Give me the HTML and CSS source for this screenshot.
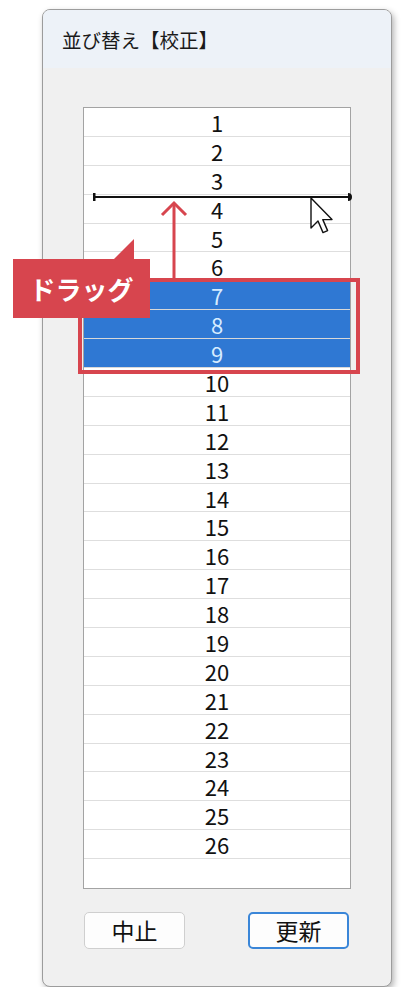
FILE: index.html
```html
<!DOCTYPE html>
<html lang="ja">
<head>
    <meta charset="UTF-8">
    <title>並び替え【校正】</title>
    <link rel="stylesheet" href="styles.css">
</head>
<body>
    <div class="window">
        <div class="title-bar">並び替え【校正】</div>

        <div class="list">
            <div class="row">1</div>
            <div class="row">2</div>
            <div class="row">3</div>
            <div class="row">4</div>
            <div class="row">5</div>
            <div class="row">6</div>
            <div class="row selected">7</div>
            <div class="row selected">8</div>
            <div class="row selected">9</div>
            <div class="row">10</div>
            <div class="row">11</div>
            <div class="row">12</div>
            <div class="row">13</div>
            <div class="row">14</div>
            <div class="row">15</div>
            <div class="row">16</div>
            <div class="row">17</div>
            <div class="row">18</div>
            <div class="row">19</div>
            <div class="row">20</div>
            <div class="row">21</div>
            <div class="row">22</div>
            <div class="row">23</div>
            <div class="row">24</div>
            <div class="row">25</div>
            <div class="row">26</div>
            <div class="row empty"></div>
        </div>

        <div class="buttons">
            <button class="btn">中止</button>
            <button class="btn primary">更新</button>
        </div>

        <!-- 挿入位置の線 -->
        <svg class="insert-line" width="260" height="12" viewBox="0 0 260 12">
            <line x1="2" y1="6" x2="257" y2="6" stroke="#111" stroke-width="2"/>
            <rect x="1" y="2" width="2.5" height="8" fill="#111"/>
            <path d="M256 2 Q260 2 260 6 Q260 10 256 10 Z" fill="#111"/>
        </svg>

        <!-- マウスカーソル -->
        <svg class="cursor" width="24" height="38" viewBox="0 0 12 19">
            <path d="M0.5 0.5 L0.5 15.5 L4 12 L6.5 17.8 L8.8 16.8 L6.4 11.3 L11 11.3 Z" fill="#fff" stroke="#111" stroke-width="0.7" stroke-linejoin="round"/>
        </svg>

        <!-- 赤い矢印 -->
        <svg class="drag-arrow" width="30" height="78" viewBox="0 0 30 78">
            <line x1="15" y1="3" x2="15" y2="78" stroke="#d7454e" stroke-width="3"/>
            <polyline points="3,15 15,3 27,15" fill="none" stroke="#d7454e" stroke-width="3"/>
        </svg>

        <div class="drag-box"></div>
        <div class="drag-label">ドラッグ</div>
    </div>
</body>
</html>
```

FILE: styles.css
```css
body {
    margin: 0;
    padding: 9px 0 0 42px;
    background-color: #fff;
    font-family: 'Noto Sans CJK JP', sans-serif;
}
.window {
    position: relative;
    width: 350px;
    height: 978px;
    box-sizing: border-box;
    border: 1px solid #9c9c9c;
    border-radius: 8px;
    background-color: #f0f0f0;
    box-shadow: 2px 3px 6px rgba(0,0,0,0.3);
}
.title-bar {
    height: 58px;
    padding: 15px 0 0 19px;
    box-sizing: border-box;
    background-color: #edf2f8;
    border-radius: 7px 7px 0 0;
    font-size: 19.5px;
    color: #1a1a1a;
}
.list {
    margin: 39px 0 0 40px;
    width: 268px;
    box-sizing: border-box;
    border: 1px solid #a3a3a3;
    background-color: #fff;
}
.row {
    height: 28.9px;
    box-sizing: border-box;
    border-bottom: 1px solid #dedede;
    text-align: center;
    font-size: 22px;
    line-height: 28px;
    color: #111;
}
.row.selected {
    background-color: #2f78d3;
    border-bottom-color: #d8d8d8;
    color: #d6ecff;
}
.row.empty {
    border-bottom: none;
}
.buttons {
    display: flex;
    justify-content: space-between;
    width: 265px;
    margin: 23px 0 0 41px;
}
.btn {
    width: 101px;
    height: 37px;
    border: 1px solid #cfcfcf;
    border-radius: 5px;
    background-color: #fdfdfd;
    font-family: 'Noto Sans CJK JP', sans-serif;
    font-size: 23px;
    line-height: 33px;
    color: #111;
    padding: 0;
}
.btn.primary {
    border: 2px solid #3a86d8;
}
.insert-line {
    position: absolute;
    left: 49px;
    top: 181px;
}
.cursor {
    position: absolute;
    left: 267px;
    top: 187px;
}
.drag-arrow {
    position: absolute;
    left: 116px;
    top: 190px;
}
.drag-box {
    position: absolute;
    left: 35px;
    top: 268px;
    width: 282px;
    height: 96px;
    box-sizing: border-box;
    border: 4px solid #d7454e;
}
.drag-label {
    position: absolute;
    left: -30px;
    top: 249px;
    width: 137px;
    height: 59px;
    background-color: #d7454e;
    color: #fff;
    font-weight: bold;
    font-size: 26px;
    line-height: 59px;
    text-align: center;
}
.drag-label::before {
    content: "";
    position: absolute;
    left: 101px;
    top: -20px;
    width: 0;
    height: 0;
    border-bottom: 20px solid #d7454e;
    border-left: 20px solid transparent;
}
```
